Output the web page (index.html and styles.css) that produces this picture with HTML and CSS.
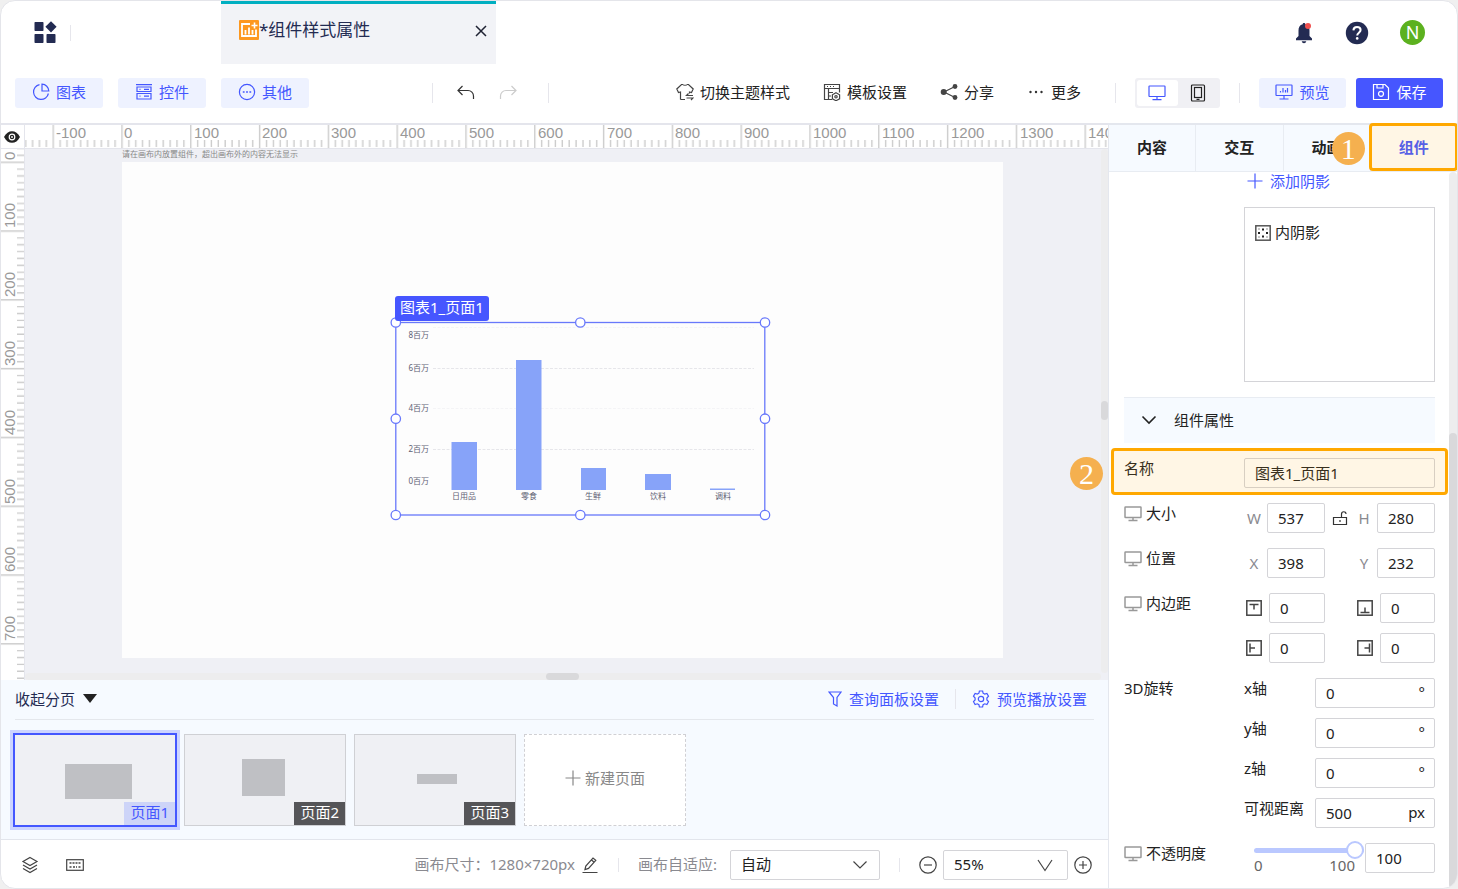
FILE: index.html
```html
<!DOCTYPE html>
<html lang="zh-CN">
<head>
  <meta charset="UTF-8">
  <meta name="viewport" content="width=device-width, initial-scale=1.0">
  <title>组件样式属性</title>
  <link rel="stylesheet" href="styles.css">
</head>
<body>
  <svg class="defs" width="0" height="0" aria-hidden="true">
    <symbol id="monitor" viewBox="0 0 18 16">
      <rect x="1" y="1" width="16" height="10.5" rx="0.5"/>
      <path d="M9 11.5v3M4.5 14.6h9"/>
    </symbol>
    <symbol id="chevron" viewBox="0 0 16 16">
      <path d="M1.5 4.5L8 11l6.5-6.5"/>
    </symbol>
    <symbol id="plus" viewBox="0 0 16 16">
      <path d="M8 0.5v15M0.5 8h15"/>
    </symbol>
  </svg>

  <div class="app">
    <header class="header">
      <button class="home" aria-label="首页">
        <svg width="23" height="23" viewBox="0 0 23 23" fill="#232b52">
          <rect x="0.5" y="1" width="9" height="9" rx="0.8"/>
          <rect x="0.5" y="13" width="9" height="9" rx="0.8"/>
          <rect x="12.5" y="13" width="9" height="9" rx="0.8"/>
          <path d="M17 0.2l5.6 5.6L17 11.400l-5.600-5.600z"/>
        </svg>
      </button>
      <span class="divider divider-short"></span>
      <div class="doc-tab">
        <svg width="20" height="20" viewBox="0 0 20 20">
          <rect width="20" height="20" rx="1" fill="#fd9820"/>
          <path d="M11 4H3v12h14V9.500" fill="none" stroke="#fff" stroke-width="1.800"/>
          <path d="M6.500 14.500V10M10 14.500V7.500M13.500 14.500V10" stroke="#fff" stroke-width="1.800"/>
          <path d="M15.500 2.500v6M12.500 5.500h6" stroke="#fff" stroke-width="1.600"/>
        </svg>
        <span class="doc-name">*组件样式属性</span>
        <button class="doc-close" aria-label="关闭">
          <svg width="12" height="12" viewBox="0 0 12 12" fill="none" stroke="#1f2233" stroke-width="1.500"><path d="M1 1l10 10M11 1L1 11"/></svg>
        </button>
      </div>
      <div class="account">
        <button aria-label="消息">
          <svg width="20" height="22" viewBox="0 0 20 22">
            <path d="M10 1c.9 0 1.300.5 1.300 1.300C14.300 3 15.500 5.500 15.500 8.500v5.500l2.500 2.600v1.600H2v-1.600L4.500 14V8.500c0-3 1.200-5.500 4.200-6.200C8.700 1.500 9.100 1 10 1zM7.700 19.300h4.600c-.3 1.300-1.100 2-2.300 2s-2-.7-2.300-2z" fill="#232b52"/>
            <circle cx="14" cy="4" r="3" fill="#f0504f"/>
          </svg>
        </button>
        <button aria-label="帮助">
          <svg width="24" height="24" viewBox="0 0 24 24">
            <circle cx="12" cy="12" r="11.200" fill="#232b52"/>
            <path d="M8.400 9.400c.1-2.200 1.500-3.500 3.600-3.500s3.600 1.300 3.600 3.200c0 2.500-3.400 2.800-3.400 5.400" fill="none" stroke="#fff" stroke-width="2"/>
            <circle cx="12.200" cy="17.400" r="1.300" fill="#fff"/>
          </svg>
        </button>
        <button class="avatar">N</button>
      </div>
    </header>

    <nav class="toolbar">
      <button class="tool-btn">
        <svg class="icon" width="18" height="18" viewBox="0 0 18 18"><path d="M7.500 1.600A7.500 7.500 0 1 0 16.400 10.500"/><path d="M10 1.200V8h6.800A7 7 0 0 0 10 1.200z"/></svg>
        图表
      </button>
      <button class="tool-btn">
        <svg class="icon" width="18" height="18" viewBox="0 0 18 18"><path d="M1 1.700h16M2 4h14v4.500H2zM2 10.500h14v5.500H2zM4.500 6.300h1M9 6.300h5M4.500 13.200h1M9 13.200h5"/></svg>
        控件
      </button>
      <button class="tool-btn">
        <svg class="icon" width="18" height="18" viewBox="0 0 18 18"><circle cx="9" cy="9" r="7.600"/><path d="M4.800 9h1.800M8.100 9h1.800M11.400 9h1.800" stroke-width="1.600"/></svg>
        其他
      </button>
      <div class="history">
        <span class="divider"></span>
        <button aria-label="撤销"><svg class="icon" width="18" height="16" viewBox="0 0 18 16" stroke="#333"><path d="M5.500 1L1 5.500 5.500 10M1 5.500h10a5.500 5.500 0 0 1 5.500 5.500v3"/></svg></button>
        <button class="redo" aria-label="重做"><svg class="icon" width="18" height="16" viewBox="0 0 18 16" stroke="#ccc"><path d="M12.500 1L17 5.500 12.500 10M17 5.500H7A5.500 5.500 0 0 0 1.500 11v3"/></svg></button>
        <span class="divider"></span>
      </div>
      <div class="actions">
        <button class="action">
          <svg class="icon" width="18" height="18" viewBox="0 0 18 18"><path d="M4.500 16.500V9L2.500 9.600.8 6 5.500 1.500h1.200c.8 1 3.800 1 4.600 0h1.200L17.200 6l-1.700 3.600-2-.6v1.500M4.500 16.500h4.500M17 12.500h-6.500l2-2M10.500 15h6.500l-2 2"/></svg>
          切换主题样式
        </button>
        <button class="action">
          <svg class="icon" width="18" height="18" viewBox="0 0 18 18"><path d="M9 16.500H1.500v-15h15v8M1.500 5.500h15M5.500 5.500v11M5.500 9.500H10M5.500 13H8M4 3.500h1M7 3.500h1M10 3.500h1"/><path d="M13 9.800l3.600 2v4L13 17.700l-3.600-1.900v-4z"/><circle cx="13" cy="13.800" r="1.200"/></svg>
          模板设置
        </button>
        <button class="action">
          <svg class="icon" width="18" height="18" viewBox="0 0 18 18"><path d="M15 3.500L4 9l11 5.500"/><g fill="#444" stroke="none"><circle cx="15" cy="3.500" r="2.400"/><circle cx="3.700" cy="9" r="3"/><circle cx="15" cy="14.500" r="2.400"/></g></svg>
          分享
        </button>
        <button class="action">
          <svg width="18" height="18" viewBox="0 0 18 18" fill="#333"><circle cx="3.500" cy="9" r="1.200"/><circle cx="9" cy="9" r="1.200"/><circle cx="14.500" cy="9" r="1.200"/></svg>
          更多
        </button>
      </div>
      <span class="divider"></span>
      <div class="device">
        <button class="device-on" aria-label="桌面端"><svg class="icon" width="18" height="16" stroke="#4457ff"><use href="#monitor"/></svg></button>
        <button aria-label="移动端"><svg class="icon" width="16" height="18" viewBox="0 0 16 18" stroke="#222"><rect x="1.500" y="1" width="13" height="16" rx="1"/><rect x="4.500" y="3.500" width="7" height="10"/><path d="M6.500 15.300h3"/></svg></button>
      </div>
      <span class="divider"></span>
      <div class="publish">
        <button class="tool-btn">
          <svg class="icon" width="18" height="18" viewBox="0 0 18 18"><rect x="1" y="2" width="16" height="10.500" rx="0.500"/><path d="M9 12.500v3M4.500 16h9M5.500 9.500V8M8 9.500V5M10.500 9.500V7M12.500 9.500V5"/></svg>
          预览
        </button>
        <button class="tool-btn save">
          <svg class="icon" width="18" height="18" viewBox="0 0 18 18"><path d="M1.500 1.500h11.500l3.500 3.500v11.500h-15zM5 1.500v3.500h6V1.500"/><circle cx="9" cy="10.800" r="2.500"/></svg>
          保存
        </button>
      </div>
    </nav>

    <div class="workspace">
      <main class="editor">
        <div class="board">
          <button class="corner" aria-label="显示标尺">
            <svg width="16" height="12" viewBox="0 0 16 12"><path d="M0 6C2 2 4.800.2 8 .2S14 2 16 6c-2 4-4.800 5.800-8 5.800S2 10 0 6z" fill="#222"/><circle cx="8" cy="6" r="2.800" fill="#222" stroke="#fff" stroke-width="1.200"/><circle cx="8" cy="6" r="0.900" fill="#fff"/></svg>
          </button>
          <svg class="ruler ruler-x">
            <defs>
              <pattern id="ticks-x" x="27.500" y="0" width="68.800" height="24" patternUnits="userSpaceOnUse">
                <path d="M0.700 0v23M7.600 15v7M14.500 15v7M21.300 15v7M28.200 15v7M35.100 15v7M42 15v7M48.900 15v7M55.700 15v7M62.600 15v7"/>
              </pattern>
            </defs>
            <rect width="100%" height="24" fill="url(#ticks-x)"/>
            <g>
              <text x="31" y="13">-100</text>
              <text x="99" y="13">0</text>
              <text x="169" y="13">100</text>
              <text x="237" y="13">200</text>
              <text x="306" y="13">300</text>
              <text x="375" y="13">400</text>
              <text x="444" y="13">500</text>
              <text x="513" y="13">600</text>
              <text x="582" y="13">700</text>
              <text x="650" y="13">800</text>
              <text x="719" y="13">900</text>
              <text x="788" y="13">1000</text>
              <text x="857" y="13">1100</text>
              <text x="926" y="13">1200</text>
              <text x="995" y="13">1300</text>
              <text x="1063" y="13">1400</text>
            </g>
          </svg>
          <svg class="ruler ruler-y">
            <defs>
              <pattern id="ticks-y" x="0" y="12.500" width="24" height="68.800" patternUnits="userSpaceOnUse">
                <path d="M0 0.700h23M16 7.600h7M16 14.500h7M16 21.300h7M16 28.200h7M16 35.100h7M16 42h7M16 48.900h7M16 55.700h7M16 62.600h7"/>
              </pattern>
            </defs>
            <rect width="24" height="100%" fill="url(#ticks-y)"/>
            <g>
              <text transform="translate(14 11) rotate(-90)">0</text>
              <text transform="translate(14 79) rotate(-90)">100</text>
              <text transform="translate(14 148) rotate(-90)">200</text>
              <text transform="translate(14 217) rotate(-90)">300</text>
              <text transform="translate(14 286) rotate(-90)">400</text>
              <text transform="translate(14 355) rotate(-90)">500</text>
              <text transform="translate(14 423) rotate(-90)">600</text>
              <text transform="translate(14 492) rotate(-90)">700</text>
            </g>
          </svg>
          <div class="stage">
            <p class="hint">请在画布内放置组件，超出画布外的内容无法显示</p>
            <div class="canvas">
              <div class="widget">
                <span class="widget-name">图表1_页面1</span>
                <svg class="chart" width="370" height="193" viewBox="0 0 370 193">
                  <g stroke="#e6e6ea" stroke-dasharray="3 1.500">
                    <path d="M38 46.500h321M38 127.500h321"/>
                    <path d="M38 86.500h321M38 5.500h321" stroke="#f4f4f6"/>
                  </g>
                  <g fill="#87a3f9">
                    <rect x="56.500" y="120" width="25.500" height="48"/>
                    <rect x="121" y="38" width="25.500" height="130"/>
                    <rect x="186" y="146" width="25" height="22"/>
                    <rect x="250" y="152" width="26" height="16"/>
                    <rect x="315" y="166.500" width="25" height="1.500"/>
                  </g>
                  <g text-anchor="end">
                    <text x="34" y="16">8百万</text>
                    <text x="34" y="49">6百万</text>
                    <text x="34" y="89">4百万</text>
                    <text x="34" y="130">2百万</text>
                    <text x="34" y="162">0百万</text>
                  </g>
                  <g text-anchor="middle">
                    <text x="69" y="177">日用品</text>
                    <text x="134" y="177">零食</text>
                    <text x="198" y="177">生鲜</text>
                    <text x="263" y="177">饮料</text>
                    <text x="328" y="177">调料</text>
                  </g>
                  <rect class="frame" x="0.800" y="0.500" width="369" height="192.500"/>
                  <g class="handles">
                    <circle cx="0.800" cy="0.500" r="4.700"/><circle cx="185.300" cy="0.500" r="4.700"/><circle cx="370" cy="0.500" r="4.700"/>
                    <circle cx="0.800" cy="96.700" r="4.700"/><circle cx="370" cy="96.700" r="4.700"/>
                    <circle cx="0.800" cy="193" r="4.700"/><circle cx="185.300" cy="193" r="4.700"/><circle cx="370" cy="193" r="4.700"/>
                  </g>
                </svg>
              </div>
            </div>
            <div class="scroll-y"><span></span></div>
            <div class="scroll-x"><span></span></div>
          </div>
          <span class="step step-2">2</span>
        </div>

        <section class="pages">
          <div class="pages-head">
            <button class="fold">收起分页 <svg width="14" height="9" viewBox="0 0 14 9"><path d="M0 0h14L7 9z" fill="#222"/></svg></button>
            <button class="link-btn">
              <svg class="icon" width="14" height="16" viewBox="0 0 14 16"><path d="M1 1h12L9 6.500V15L5.500 13V6.500z"/></svg>
              查询面板设置
            </button>
            <span class="divider"></span>
            <button class="link-btn">
              <svg class="icon" width="18" height="18" viewBox="0 0 18 18"><path d="M7.400 1h3.200l.5 2.200 1.600.9 2.200-.7 1.600 2.800L14.900 8v2l1.600 1.700-1.600 2.800-2.200-.7-1.600.9-.5 2.300H7.400l-.5-2.300-1.600-.9-2.200.7-1.600-2.800L3.100 10V8L1.500 6.200l1.600-2.800 2.200.7 1.600-.9z"/><circle cx="9" cy="9" r="2.700"/></svg>
              预览播放设置
            </button>
          </div>
          <div class="page-list">
            <button class="page page-on"><i class="shape shape-1"></i><span>页面1</span></button>
            <button class="page"><i class="shape shape-2"></i><span>页面2</span></button>
            <button class="page"><i class="shape shape-3"></i><span>页面3</span></button>
            <button class="page-new"><svg class="icon" width="16" height="16"><use href="#plus"/></svg>新建页面</button>
          </div>
        </section>

        <footer class="statusbar">
          <button aria-label="图层"><svg class="icon" width="18" height="18" viewBox="0 0 18 18" stroke="#444"><path d="M9 1.500l7 4-7 4-7-4zM2 9l7 4 7-4M2 12.500l7 4 7-4"/></svg></button>
          <button class="keys" aria-label="快捷键"><svg class="icon" width="18" height="12" viewBox="0 0 18 12" stroke="#444"><rect x="0.700" y="0.700" width="16.600" height="10.600"/><path d="M3.500 4h11M3.500 8h2M7 8h4M12.500 8h2" stroke-width="1.500" stroke-dasharray="2 1"/></svg></button>
          <div class="status-tools">
            <span class="muted">画布尺寸：1280×720px</span>
            <button aria-label="修改尺寸"><svg class="icon" width="18" height="18" viewBox="0 0 18 18" stroke="#444"><path d="M1.500 16.500h15M4 13.500l.8-3.500L12 2l2.800 2.400-7.300 8zM10.300 3.800l2.800 2.400"/></svg></button>
            <span class="divider"></span>
            <label class="muted" for="fit">画布自适应:</label>
            <div class="select select-fit">
              <select id="fit"><option>自动</option></select>
              <svg class="icon" width="16" height="16" stroke="#444"><use href="#chevron"/></svg>
            </div>
            <span class="divider"></span>
            <div class="zoom">
              <button aria-label="缩小"><svg class="icon" width="18" height="18" viewBox="0 0 18 18" stroke="#444"><circle cx="9" cy="9" r="8.200"/><path d="M5 9h8"/></svg></button>
              <div class="select select-zoom">
                <select id="zoom" aria-label="缩放"><option>55%</option></select>
                <svg class="icon" width="16" height="16" viewBox="0 0 16 16" stroke="#444"><path d="M1 3l7 10.500L15 3"/></svg>
              </div>
              <button aria-label="放大"><svg class="icon" width="18" height="18" viewBox="0 0 18 18" stroke="#444"><circle cx="9" cy="9" r="8.200"/><path d="M5 9h8M9 5v8"/></svg></button>
            </div>
          </div>
        </footer>
      </main>

      <aside class="panel">
        <div class="tabs">
          <button>内容</button>
          <button>交互</button>
          <button>动画<span class="step step-1">1</span></button>
          <button class="tab-on">组件<span class="callout"></span></button>
        </div>
        <div class="panel-body">
          <div class="props">
            <div class="shadow-block">
              <button class="link-btn add"><svg class="icon" width="16" height="16"><use href="#plus"/></svg>添加阴影</button>
              <div class="shadow-list">
                <svg class="icon" width="16" height="16" viewBox="0 0 16 16"><rect x="0.800" y="0.800" width="14.400" height="14.400" stroke="#555" stroke-width="1.500"/><path d="M7 3.500h2v2H7zM3 7h2v2H3zM11 7h2v2h-2zM7 10.500h2v2H7zM3.500 3.500h1v1h-1zM11.500 3.500h1v1h-1zM3.500 11.500h1v1h-1zM11.500 11.500h1v1h-1z" fill="#222"/></svg>
                <span>内阴影</span>
              </div>
            </div>
            <h3 class="group"><svg class="icon" width="16" height="16" stroke="#222"><use href="#chevron"/></svg>组件属性</h3>

            <div class="row">
              <label class="name" for="name">名称</label>
              <input class="wide" id="name" type="text" value="图表1_页面1">
              <span class="callout"></span>
            </div>
            <div class="row">
              <span class="name"><svg class="icon" width="18" height="16"><use href="#monitor"/></svg>大小</span>
              <div class="pair">
                <label for="w">W</label><input id="w" type="text" value="537">
                <button aria-label="锁定比例"><svg class="icon" width="16" height="16" viewBox="0 0 16 16" stroke="#333"><path d="M1.500 7.500h13v7h-13zM9.500 7.500V4.200C9.500 1 14 1 14 4M8 10v2"/></svg></button>
                <label for="h">H</label><input id="h" type="text" value="280">
              </div>
            </div>
            <div class="row">
              <span class="name"><svg class="icon" width="18" height="16"><use href="#monitor"/></svg>位置</span>
              <div class="pair">
                <label for="x">X</label><input id="x" type="text" value="398">
                <span></span>
                <label for="y">Y</label><input id="y" type="text" value="232">
              </div>
            </div>
            <div class="row">
              <span class="name"><svg class="icon" width="18" height="16"><use href="#monitor"/></svg>内边距</span>
              <div class="stack">
                <div class="pair pair-pad">
                  <label for="pt" aria-label="上边距"><svg class="icon" width="16" height="16" viewBox="0 0 16 16"><rect x="0.800" y="0.800" width="14.400" height="14.400"/><path d="M3.500 4.500h9M8 4.500v5"/></svg></label><input id="pt" type="text" value="0">
                  <label for="pb" aria-label="下边距"><svg class="icon" width="16" height="16" viewBox="0 0 16 16"><rect x="0.800" y="0.800" width="14.400" height="14.400"/><path d="M3.500 12.500h9M8 12.500v-5"/></svg></label><input id="pb" type="text" value="0">
                </div>
                <div class="pair pair-pad">
                  <label for="pl" aria-label="左边距"><svg class="icon" width="16" height="16" viewBox="0 0 16 16"><rect x="0.800" y="0.800" width="14.400" height="14.400"/><path d="M4 3.500v9M4 8h5"/></svg></label><input id="pl" type="text" value="0">
                  <label for="pr" aria-label="右边距"><svg class="icon" width="16" height="16" viewBox="0 0 16 16"><rect x="0.800" y="0.800" width="14.400" height="14.400"/><path d="M12.500 3.500v9M12.500 8h-5"/></svg></label><input id="pr" type="text" value="0">
                </div>
              </div>
            </div>
            <div class="row">
              <span class="name">3D旋转</span>
              <div class="stack">
                <div class="axis"><label for="rx">x轴</label><div class="unit"><input id="rx" type="text" value="0"><span>°</span></div></div>
                <div class="axis"><label for="ry">y轴</label><div class="unit"><input id="ry" type="text" value="0"><span>°</span></div></div>
                <div class="axis"><label for="rz">z轴</label><div class="unit"><input id="rz" type="text" value="0"><span>°</span></div></div>
                <div class="axis"><label for="dist">可视距离</label><div class="unit"><input id="dist" type="text" value="500"><span>px</span></div></div>
              </div>
            </div>
            <div class="row">
              <label class="name" for="opacity"><svg class="icon" width="18" height="16"><use href="#monitor"/></svg>不透明度</label>
              <div class="opacity">
                <div class="slider">
                  <input id="opacity" type="range" min="0" max="100" value="100">
                  <div class="scale"><span>0</span><span>100</span></div>
                </div>
                <input class="opacity-value" type="text" value="100" aria-label="不透明度数值">
              </div>
            </div>
          </div>
          <div class="panel-scroll"><span></span></div>
        </div>
      </aside>
    </div>
  </div>
</body>
</html>
```

FILE: styles.css
```css
* {
  box-sizing: border-box;
}
body {
  margin: 0;
  background: #f0f0f0;
  font-family: "Noto Sans", "Noto Sans CJK SC", sans-serif;
  font-size: 15px;
  line-height: 20px;
  color: #222;
}
button, input, select {
  font: inherit;
  color: inherit;
}
button {
  border: none;
  background: none;
  padding: 0;
  cursor: pointer;
}
svg {
  display: block;
  flex: none;
}
.defs {
  position: absolute;
}
.icon {
  fill: none;
  stroke-width: 1.2;
}
.divider {
  flex: none;
  width: 1px;
  height: 20px;
  background: #e6e6ec;
}
.divider-short {
  height: 16px;
}
.app {
  display: flex;
  flex-direction: column;
  height: 100vh;
  border: 1px solid #e4e5ea;
  border-radius: 15px;
  background: #fff;
  overflow: hidden;
}

/* header */
.header {
  display: flex;
  align-items: center;
  height: 63px;
  flex: none;
  padding: 0 32px 0 33px;
}
.home {
  margin-right: 13px;
}
.doc-tab {
  display: flex;
  align-items: center;
  align-self: stretch;
  width: 275px;
  margin-left: 150px;
  padding: 0 9px 8px 18px;
  border-top: 3px solid #00afc1;
  background: #f2f3f7;
  font-size: 17px;
  color: #232b52;
}
.doc-name {
  flex: 1;
}
.doc-close {
  padding-top: 2px;
}
.account {
  display: flex;
  align-items: center;
  gap: 31px;
  margin-left: auto;
}
.avatar {
  width: 25px;
  height: 25px;
  padding-bottom: 2px;
  border-radius: 50%;
  background: #5cb11f;
  color: #fff;
  font-size: 18px;
}

/* toolbar */
.toolbar {
  display: flex;
  align-items: center;
  height: 59px;
  flex: none;
  padding: 0 14px 1px;
}
.tool-btn {
  display: flex;
  align-items: center;
  justify-content: center;
  gap: 6px;
  width: 88px;
  height: 30px;
  padding-bottom: 2px;
  margin-right: 15px;
  border-radius: 3px;
  background: #eef2ff;
  color: #4457ff;
}
.tool-btn .icon, .link-btn .icon {
  stroke: #4457ff;
}
.history {
  display: flex;
  align-items: center;
  gap: 24px;
  margin-left: 108px;
}
.redo {
  padding-right: 7px;
}
.actions {
  display: flex;
  gap: 33px;
  margin: 0 34px 0 auto;
}
.action {
  display: flex;
  align-items: center;
  gap: 6px;
  padding-bottom: 2px;
}
.action .icon {
  stroke: #444;
}
.device {
  display: flex;
  width: 85px;
  height: 30px;
  margin: 0 19px;
  padding: 2px;
  border-radius: 3px;
  background: #f0f0f4;
}
.device button {
  display: flex;
  flex: 1;
  align-items: center;
  justify-content: center;
}
.device .device-on {
  border-radius: 3px;
  background: #fff;
}
.publish {
  display: flex;
  gap: 10px;
  margin-left: 19px;
}
.publish .tool-btn {
  width: 87px;
  margin: 0;
}
.publish .save {
  background: #4656ff;
  color: #fff;
}
.save .icon {
  stroke: #fff;
}

/* editor */
.workspace {
  display: flex;
  flex: 1;
  min-height: 0;
}
.editor {
  display: flex;
  flex-direction: column;
  flex: 1;
  min-width: 0;
}
.board {
  position: relative;
  display: grid;
  grid-template: 24px 1fr / 24px 1fr;
  flex: 1;
  min-height: 0;
  border-top: 2px solid #e4e5ec;
}
.corner {
  display: flex;
  align-items: center;
  justify-content: center;
  padding-right: 2px;
  border-right: 1px solid #e4e5ec;
  border-bottom: 1px solid #e4e5ec;
}
.ruler {
  width: 100%;
  height: 100%;
  overflow: hidden;
  background: #fff;
}
.ruler-x {
  border-bottom: 1px solid #e4e5ec;
}
.ruler-y {
  border-right: 1px solid #e4e5ec;
}
.ruler path {
  stroke: #ccc;
  stroke-width: 1.4;
}
.ruler text {
  font-family: "Liberation Sans", sans-serif;
  font-size: 15px;
  fill: #999;
}
.stage {
  position: relative;
  min-width: 0;
  overflow: hidden;
  padding: 0 105px 22px 97px;
  background: #eff0f5;
  display: flex;
  flex-direction: column;
}
.hint {
  margin: 0;
  padding-bottom: 4px;
  font-size: 8px;
  line-height: 9px;
  color: #888;
}
.canvas {
  position: relative;
  flex: 1;
  background: #fdfdfd;
}
.widget {
  position: absolute;
  left: 273px;
  top: 160px;
}
.widget-name {
  position: absolute;
  left: 0;
  bottom: 194px;
  padding: 0 5px 2px;
  border-radius: 3px;
  background: #4656ff;
  color: #fff;
  line-height: 23px;
  white-space: nowrap;
}
.chart {
  overflow: visible;
}
.chart text {
  font-size: 8px;
  fill: #5f6275;
}
.frame {
  fill: none;
  stroke: #6878fb;
  stroke-width: 1.3;
}
.handles {
  fill: #fff;
  stroke: #6878fb;
  stroke-width: 1.3;
}
.scroll-y, .scroll-x {
  position: absolute;
  border-radius: 4px;
  background: #ededee;
}
.scroll-y {
  top: 0;
  right: 0;
  bottom: 7px;
  width: 7px;
}
.scroll-x {
  left: 0;
  right: 7px;
  bottom: 0;
  height: 7px;
}
.scroll-y span, .scroll-x span, .panel-scroll span {
  display: block;
  border-radius: 4px;
  background: #d9d9db;
}
.scroll-y span {
  height: 19px;
  margin-top: 252px;
}
.scroll-x span {
  width: 33px;
  height: 7px;
  margin-left: 521px;
}

/* tutorial marks */
.step {
  position: absolute;
  z-index: 2;
  width: 33px;
  height: 33px;
  border-radius: 50%;
  background: #f5b04f;
  color: #fff;
  font: 30px/33px "Liberation Serif", serif;
  text-align: center;
}
.step-1 {
  right: 5px;
  top: 7px;
}
.step-2 {
  right: 5px;
  top: 332px;
}
.callout {
  position: absolute;
  border: 3px solid #ffa800;
  border-radius: 4px;
  background: rgba(255, 168, 0, 0.1);
  pointer-events: none;
}

/* pages */
.pages {
  flex: none;
  padding: 0 14px 13px;
  border-bottom: 1px solid #e2e5ec;
  background: #f6faff;
}
.pages-head {
  display: flex;
  align-items: center;
  height: 40px;
  padding: 0 7px 2px 0;
  border-bottom: 1px solid #e4e7ec;
}
.fold {
  display: flex;
  align-items: center;
  gap: 8px;
  margin-right: auto;
  color: #232b52;
}
.link-btn {
  display: flex;
  align-items: center;
  gap: 7px;
  color: #4457ff;
}
.pages-head .divider {
  margin: 0 16px;
}
.page-list {
  display: flex;
  gap: 8px;
  margin-left: -1px;
  padding-top: 14px;
}
.page, .page-new {
  width: 162px;
  height: 92px;
  border: 1px solid #cfd0d4;
}
.page {
  position: relative;
  display: flex;
  align-items: center;
  justify-content: center;
  background: #eff0f4;
}
.page span {
  position: absolute;
  right: 0;
  bottom: 0;
  padding: 0 6px 3px;
  line-height: 20px;
  background: #555558;
  color: #fff;
}
.page-on {
  border-color: #4457ff;
  box-shadow: 0 0 0 1px #4457ff, 0 0 0 4px #ccd4ff;
}
.page-on span {
  background: #cdd4f8;
  color: #4457ff;
}
.shape {
  background: #bfc0c4;
}
.shape-1 {
  width: 67px;
  height: 35px;
  margin: 3px 0 0 6px;
}
.shape-2 {
  width: 43px;
  height: 37px;
  margin: 0 3px 5px 0;
}
.shape-3 {
  width: 40px;
  height: 10px;
  margin: 0 0 3px 4px;
}
.page-new {
  display: flex;
  align-items: center;
  justify-content: center;
  gap: 4px;
  padding-bottom: 4px;
  border: 1px dashed #d0d0d4;
  background: #fff;
  color: #888;
}
.page-new .icon {
  stroke: #888;
}

/* status bar */
.statusbar {
  display: flex;
  align-items: center;
  flex: none;
  height: 48px;
  padding: 2px 16px 0 20px;
}
.keys {
  margin-left: 27px;
}
.status-tools {
  display: flex;
  align-items: center;
  margin-left: auto;
}
.muted {
  padding-bottom: 3px;
  color: #8a8a90;
}
.status-tools .muted + button {
  margin-left: 6px;
}
.status-tools .divider {
  height: 14px;
  margin: 0 19px;
}
.select {
  display: grid;
  align-items: center;
}
.select select, .select svg {
  grid-area: 1 / 1;
}
.select svg {
  justify-self: end;
  margin-right: 12px;
  pointer-events: none;
}
.select select {
  appearance: none;
  width: 100%;
  height: 30px;
  padding: 0 10px 2px;
  border: 1px solid #d4d4d8;
  border-radius: 2px;
  background: #fff;
}
.select-fit {
  width: 150px;
  margin-left: 13px;
}
.select-zoom {
  width: 125px;
}
.select-zoom svg {
  margin-right: 15px;
}
.zoom {
  display: flex;
  align-items: center;
  gap: 6px;
}

/* right panel */
.panel {
  display: flex;
  flex-direction: column;
  width: 349px;
  flex: none;
  border-top: 2px solid #e4e7ee;
  border-left: 1px solid #e4e7ee;
}
.tabs {
  display: flex;
  height: 47px;
  flex: none;
  border-bottom: 1px solid #e8ecf2;
  background: #f6faff;
}
.tabs button {
  position: relative;
  flex: 1;
  padding-bottom: 2px;
  border-right: 1px solid #e8ecf2;
  font-weight: bold;
}
.tabs .tab-on {
  border-right: none;
  background: #fff;
  color: #4457ff;
}
.tabs .callout {
  inset: -2px -1px 0 -2px;
}
.panel-body {
  display: flex;
  flex: 1;
  min-height: 0;
}
.props {
  flex: 1;
  padding: 0 14px 0 15px;
  overflow: hidden;
}
.panel-scroll {
  width: 8px;
  border-radius: 4px;
  background: #ededee;
}
.panel-scroll span {
  height: calc(100% - 261px);
  margin-top: 261px;
}
.shadow-block {
  margin-left: 120px;
}
.add {
  height: 20px;
  padding: 0 0 2px 3px;
}
.shadow-list {
  display: flex;
  align-items: flex-start;
  gap: 4px;
  height: 175px;
  margin-top: 15px;
  padding: 14px 10px;
  border: 1px solid #d4d4d8;
}
.shadow-list .icon {
  margin-top: 3px;
}
.group {
  display: flex;
  align-items: center;
  gap: 17px;
  height: 46px;
  margin: 15px 0;
  padding: 0 0 2px 17px;
  border-top: 1px solid #e8ecf2;
  background: #f6faff;
  font-size: 15px;
  font-weight: normal;
}
.group .icon {
  stroke-width: 1.6;
}
.row {
  position: relative;
  display: flex;
  margin-bottom: 15px;
}
.row .callout {
  inset: -10px -13px -7px;
}
.name {
  display: flex;
  align-items: flex-start;
  gap: 4px;
  width: 120px;
  flex: none;
}
.name .icon {
  margin-top: 3px;
  stroke: #999;
  stroke-width: 1.5;
}
.row input[type="text"] {
  width: 58px;
  height: 30px;
  padding: 0 10px;
  border: 1px solid #d4d4d8;
  border-radius: 2px;
  background: #fff;
}
.row input.wide {
  flex: 1;
  padding-bottom: 2px;
}
.pair {
  display: grid;
  grid-template-columns: 23px 58px 29px 23px 58px;
  align-items: center;
  color: #8a8a90;
}
.pair label {
  padding-right: 3px;
  text-align: center;
}
.pair input {
  color: #222;
}
.pair button {
  padding-left: 7px;
}
.pair-pad {
  grid-template-columns: 25px 56px 30px 25px 55px;
}
.pair-pad input[type="text"] {
  width: 100%;
}
.pair-pad label {
  padding: 0 0 0 2px;
}
.pair-pad label:nth-of-type(2) {
  grid-column: 4;
}
.pair-pad .icon {
  stroke: #444;
  stroke-width: 1.5;
}
.stack {
  display: grid;
  flex: 1;
  gap: 10px;
}
.axis {
  display: flex;
  justify-content: space-between;
}
.unit {
  position: relative;
  width: 120px;
}
.unit input[type="text"] {
  width: 100%;
}
.unit span {
  position: absolute;
  right: 10px;
  top: 4px;
}
.opacity {
  display: flex;
  flex: 1;
  justify-content: flex-end;
  gap: 1px;
}
.slider {
  width: 110px;
}
.slider input {
  appearance: none;
  display: block;
  width: 100%;
  height: 18px;
  margin: -2px 0 0;
  background: none;
}
.slider input::-webkit-slider-runnable-track {
  height: 5px;
  border-radius: 3px;
  background: #bac8ff;
}
.slider input::-webkit-slider-thumb {
  appearance: none;
  width: 18px;
  height: 18px;
  margin-top: -7px;
  border: 2px solid #bac8ff;
  border-radius: 50%;
  background: #fff;
}
.scale {
  display: flex;
  justify-content: space-between;
  margin: -4px 9px 0 0;
  color: #666;
}
.row input.opacity-value {
  width: 70px;
}
```
